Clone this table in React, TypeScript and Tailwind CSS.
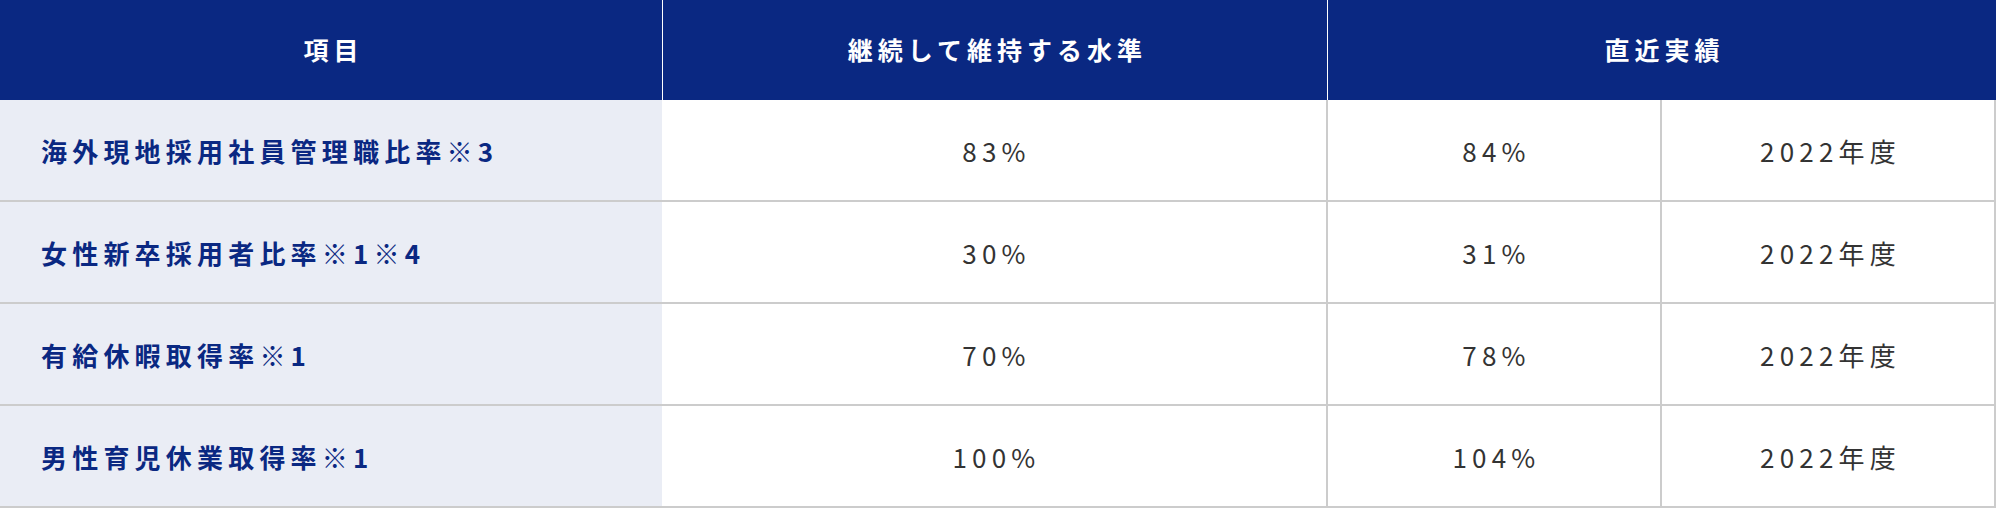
import React from "react";

const rows = [
  { label: "海外現地採用社員管理職比率※3", target: "83%", actual: "84%", year: "2022年度" },
  { label: "女性新卒採用者比率※1※4", target: "30%", actual: "31%", year: "2022年度" },
  { label: "有給休暇取得率※1", target: "70%", actual: "78%", year: "2022年度" },
  { label: "男性育児休業取得率※1", target: "100%", actual: "104%", year: "2022年度" },
];

export default function App() {
  return (
    <div
      className="w-[1996px] h-[508px] bg-white"
      style={{ fontFamily: '"Noto Sans CJK JP", "Noto Sans", sans-serif' }}
    >
      <div className="flex h-[100px] bg-[#0a2882] text-white font-bold text-[25px] tracking-[0.2em]">
        <div className="w-[662px] flex items-center justify-center pl-[5px]">項目</div>
        <div className="w-[665px] border-l border-white flex items-center justify-center pl-[5px]">
          継続して維持する水準
        </div>
        <div className="flex-1 border-l border-white flex items-center justify-center pl-[5px]">直近実績</div>
      </div>
      {rows.map((r) => (
        <div key={r.label} className="flex h-[102px] border-b-2 border-[#cccccc]">
          <div className="w-[662px] bg-[#eaedf5] flex items-center pl-[41px] text-[#0a2882] font-bold text-[26px] tracking-[0.2em]">
            {r.label}
          </div>
          <div className="w-[664px] flex items-center justify-center pl-[5px] text-[#333333] text-[26px] tracking-[0.2em]">
            {r.target}
          </div>
          <div className="w-[334px] border-l-2 border-[#cccccc] flex items-center justify-center pl-[5px] text-[#333333] text-[26px] tracking-[0.2em]">
            {r.actual}
          </div>
          <div className="w-[336px] border-l-2 border-r-2 border-[#cccccc] flex items-center justify-center pl-[5px] text-[#333333] text-[26px] tracking-[0.2em]">
            {r.year}
          </div>
        </div>
      ))}
    </div>
  );
}
